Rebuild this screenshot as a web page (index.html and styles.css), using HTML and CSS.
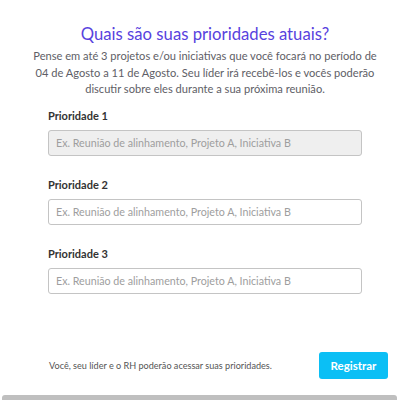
FILE: index.html
```html
<!DOCTYPE html>
<html lang="pt-BR">
<head>
<meta charset="utf-8">
<link rel="stylesheet" href="styles.css">
</head>
<body>
<main class="page">
  <h1 class="title">Quais são suas prioridades atuais?</h1>
  <p class="desc">Pense em até 3 projetos e/ou iniciativas que você focará no período de<br>04 de Agosto a 11 de Agosto. Seu líder irá recebê-los e vocês poderão<br>discutir sobre eles durante a sua próxima reunião.</p>
  <div class="fields">
    <div class="field">
      <label class="label">Prioridade 1</label>
      <div class="input input-active">Ex. Reunião de alinhamento, Projeto A, Iniciativa B</div>
    </div>
    <div class="field">
      <label class="label">Prioridade 2</label>
      <div class="input">Ex. Reunião de alinhamento, Projeto A, Iniciativa B</div>
    </div>
    <div class="field">
      <label class="label">Prioridade 3</label>
      <div class="input">Ex. Reunião de alinhamento, Projeto A, Iniciativa B</div>
    </div>
  </div>
  <div class="footer">
    <span class="note">Você, seu líder e o RH poderão acessar suas prioridades.</span>
    <button class="btn">Registrar</button>
  </div>
  <div class="scrollbar"></div>
</main>
</body>
</html>
```
FILE: styles.css
```css
html, body {
  margin: 0;
  padding: 0;
  background: #ffffff;
}
body {
  font-family: Lato, "Noto Sans", sans-serif;
  width: 410px;
  height: 400px;
  overflow: hidden;
}
.page {
  padding-top: 23px;
  display: flex;
  flex-direction: column;
}
.title {
  margin: 0;
  font-size: 16.7px;
  line-height: 22px;
  font-weight: 400;
  color: #5842de;
  text-align: center;
}
.desc {
  margin: 3px 0 0;
  font-size: 11.1px;
  line-height: 16.5px;
  color: #5e5e66;
  text-align: center;
  white-space: nowrap;
}
.fields {
  margin: 11px auto 0;
  width: 314px;
  display: flex;
  flex-direction: column;
  gap: 22px;
}
.field {
  display: flex;
  flex-direction: column;
  gap: 7px;
}
.label {
  font-size: 11px;
  line-height: 14px;
  font-weight: 700;
  color: #333333;
}
.input {
  box-sizing: border-box;
  height: 26px;
  border: 1px solid #c4c4c4;
  border-radius: 3px;
  background: #ffffff;
  padding: 0 7px;
  font-size: 10.7px;
  line-height: 24px;
  color: #9e9e9e;
}
.input-active {
  background: #efefef;
}
.footer {
  margin: 58px 22px 0 49px;
  display: flex;
  align-items: center;
  justify-content: space-between;
}
.note {
  font-size: 9.1px;
  color: #555555;
}
.btn {
  width: 69px;
  height: 27px;
  border: none;
  border-radius: 3px;
  background: #0bbff5;
  color: #ffffff;
  font-family: inherit;
  font-size: 11.5px;
  font-weight: 700;
  padding: 0;
}
.scrollbar {
  margin: 16px 0 0 2px;
  width: 395px;
  height: 5px;
  border-radius: 3px 3px 0 0;
  background: #bfbfbf;
}
```
